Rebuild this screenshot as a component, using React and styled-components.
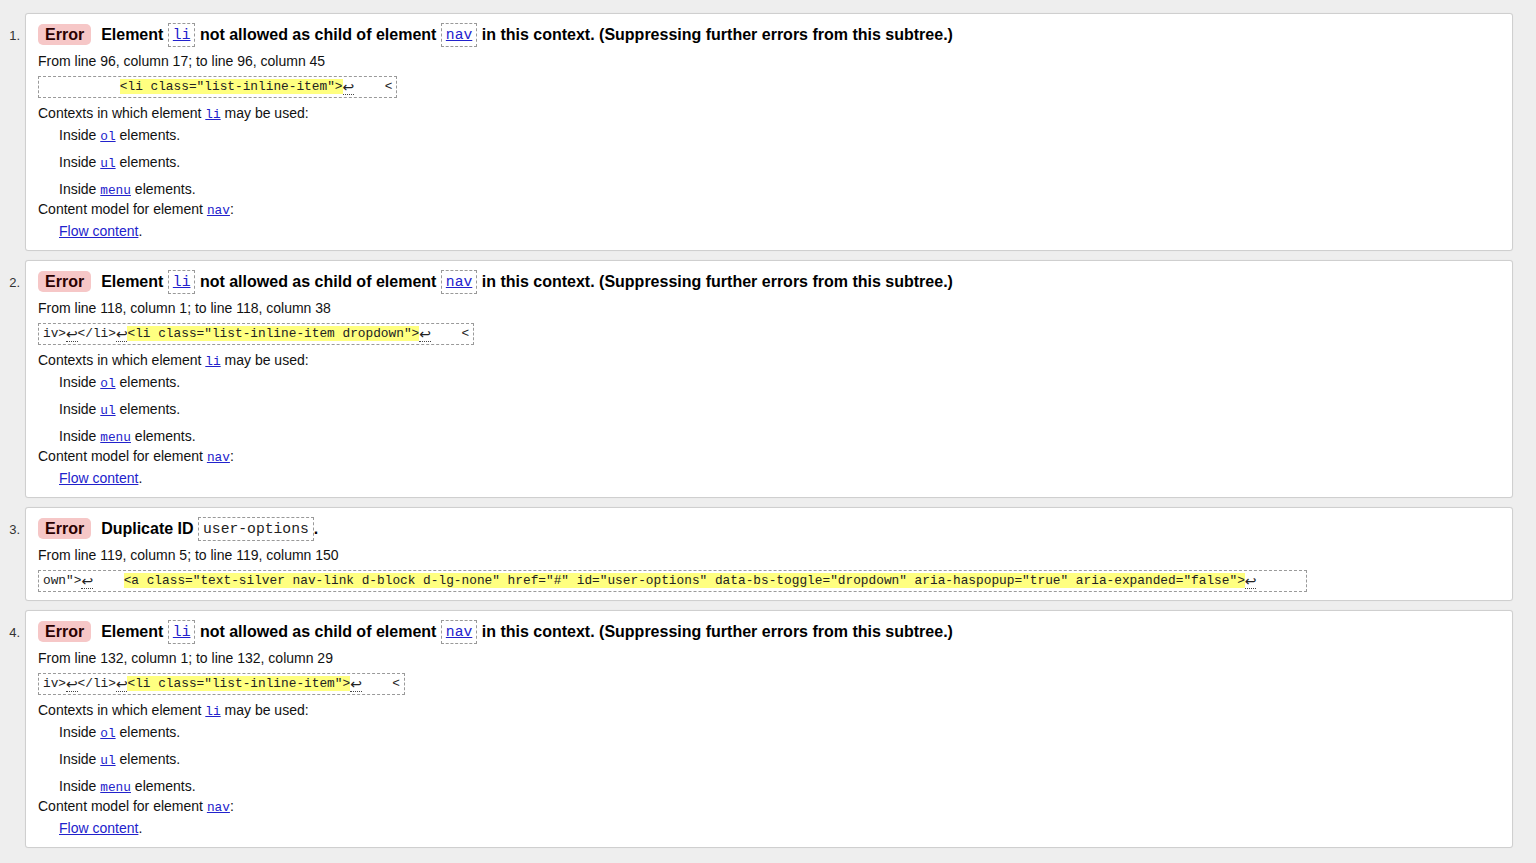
import React from "react";
import styled, { createGlobalStyle } from "styled-components";

const Global = createGlobalStyle`
  html, body { margin: 0; padding: 0; background: #eeeeee; }
  body { font-family: "Liberation Sans", Arial, sans-serif; color: #000; }
`;

const List = styled.ol`
  list-style: none;
  margin: 0;
  padding: 13px 23px 16px 0;
  display: flex;
  flex-direction: column;
  gap: 9px;
`;

const Item = styled.li`
  display: grid;
  grid-template-columns: 25px 1fr;
`;

const Num = styled.span`
  font-size: 13px;
  line-height: 16px;
  color: #333;
  text-align: right;
  padding-right: 5px;
  margin-top: 15px;
`;

const Card = styled.div`
  background: #fff;
  border: 1px solid #cfcfcf;
  border-radius: 3px;
  box-shadow: 0 0 1px rgba(0, 0, 0, 0.08);
  padding: 9px 12px 8px 12px;
  display: flex;
  flex-direction: column;
  align-items: flex-start;
`;

const Title = styled.p`
  margin: 0;
  font-size: 16px;
  font-weight: bold;
  line-height: 24px;
  height: 24px;
  white-space: nowrap;
`;

const Badge = styled.span`
  display: inline-block;
  background: #f6c7c7;
  color: #2a0000;
  border-radius: 5px;
  padding: 0 7px;
  line-height: 21px;
  margin-right: 10px;
  vertical-align: 0px;
`;

const TitleCode = styled.code`
  display: inline-block;
  font-family: "Liberation Mono", "DejaVu Sans Mono", monospace;
  font-weight: normal;
  font-size: 14.7px;
  line-height: 22px;
  padding: 0 4px;
  border: 1px dashed #999;
  vertical-align: top;
  color: ${(p) => (p.$link ? "#2222cc" : "#222")};
  text-decoration: ${(p) => (p.$link ? "underline" : "none")};
`;

const Text = styled.p`
  margin: ${(p) => p.$mt || 0}px 0 ${(p) => p.$mb || 0}px
    ${(p) => (p.$indent ? 21 : 0)}px;
  font-size: 14px;
  line-height: 18px;
  height: 18px;
  color: #111;
  white-space: nowrap;
`;

const Snippet = styled.code`
  display: block;
  margin-top: 6px;
  font-family: "Liberation Mono", "DejaVu Sans Mono", monospace;
  font-size: 12.8px;
  line-height: 20px;
  height: 20px;
  padding: 0 4px;
  border: 1px dashed #9a9a9a;
  white-space: pre;
  color: #222;
`;

const Mark = styled.span`
  background: #ffff80;
`;

const Ret = styled.span`
  display: inline-block;
  width: 11.5px;
  font-family: "DejaVu Sans", sans-serif;
  font-size: 14px;
  line-height: 13px;
  text-align: left;
  border-bottom: 1px dotted #444;
  vertical-align: -2px;
  color: #222;
`;

const Code = styled.code`
  font-family: "Liberation Mono", "DejaVu Sans Mono", monospace;
  font-size: 12.8px;
  line-height: 1;
  color: #2222cc;
  text-decoration: underline;
`;

const Link = styled.a`
  color: #2222cc;
  text-decoration: underline;
`;

const ContextBlock = ({ el, parent }) => (
  <>
    <Text $mt={6}>
      Contexts in which element <Code>{el}</Code> may be used:
    </Text>
    <Text $mt={4} $indent>
      Inside <Code>ol</Code> elements.
    </Text>
    <Text $mt={9} $indent>
      Inside <Code>ul</Code> elements.
    </Text>
    <Text $mt={9} $indent>
      Inside <Code>menu</Code> elements.
    </Text>
    <Text $mt={2}>
      Content model for element <Code>{parent}</Code>:
    </Text>
    <Text $mt={4} $mb={2} $indent>
      <Link href="#">Flow content</Link>.
    </Text>
  </>
);

const ChildTitle = () => (
  <Title>
    <Badge>Error</Badge>Element <TitleCode $link>li</TitleCode> not allowed as
    child of element <TitleCode $link>nav</TitleCode> in this context.
    (Suppressing further errors from this subtree.)
  </Title>
);

export default function App() {
  return (
    <>
      <Global />
      <List>
        <Item>
          <Num>1.</Num>
          <Card>
            <ChildTitle />
            <Text $mt={5}>From line 96, column 17; to line 96, column 45</Text>
            <Snippet>
              {"          "}
              <Mark>{'<li class="list-inline-item">'}</Mark>
              <Ret>↩</Ret>
              {"    <"}
            </Snippet>
            <ContextBlock el="li" parent="nav" />
          </Card>
        </Item>
        <Item>
          <Num>2.</Num>
          <Card>
            <ChildTitle />
            <Text $mt={5}>From line 118, column 1; to line 118, column 38</Text>
            <Snippet>
              {"iv>"}
              <Ret>↩</Ret>
              {"</li>"}
              <Ret>↩</Ret>
              <Mark>{'<li class="list-inline-item dropdown">'}</Mark>
              <Ret>↩</Ret>
              {"    <"}
            </Snippet>
            <ContextBlock el="li" parent="nav" />
          </Card>
        </Item>
        <Item>
          <Num>3.</Num>
          <Card>
            <Title>
              <Badge>Error</Badge>Duplicate ID <TitleCode>user-options</TitleCode>.
            </Title>
            <Text $mt={5}>From line 119, column 5; to line 119, column 150</Text>
            <Snippet>
              {'own">'}
              <Ret>↩</Ret>
              {"    "}
              <Mark>
                {
                  '<a class="text-silver nav-link d-block d-lg-none" href="#" id="user-options" data-bs-toggle="dropdown" aria-haspopup="true" aria-expanded="false">'
                }
              </Mark>
              <Ret>↩</Ret>
              {"      "}
            </Snippet>
          </Card>
        </Item>
        <Item>
          <Num>4.</Num>
          <Card>
            <ChildTitle />
            <Text $mt={5}>From line 132, column 1; to line 132, column 29</Text>
            <Snippet>
              {"iv>"}
              <Ret>↩</Ret>
              {"</li>"}
              <Ret>↩</Ret>
              <Mark>{'<li class="list-inline-item">'}</Mark>
              <Ret>↩</Ret>
              {"    <"}
            </Snippet>
            <ContextBlock el="li" parent="nav" />
          </Card>
        </Item>
      </List>
    </>
  );
}
